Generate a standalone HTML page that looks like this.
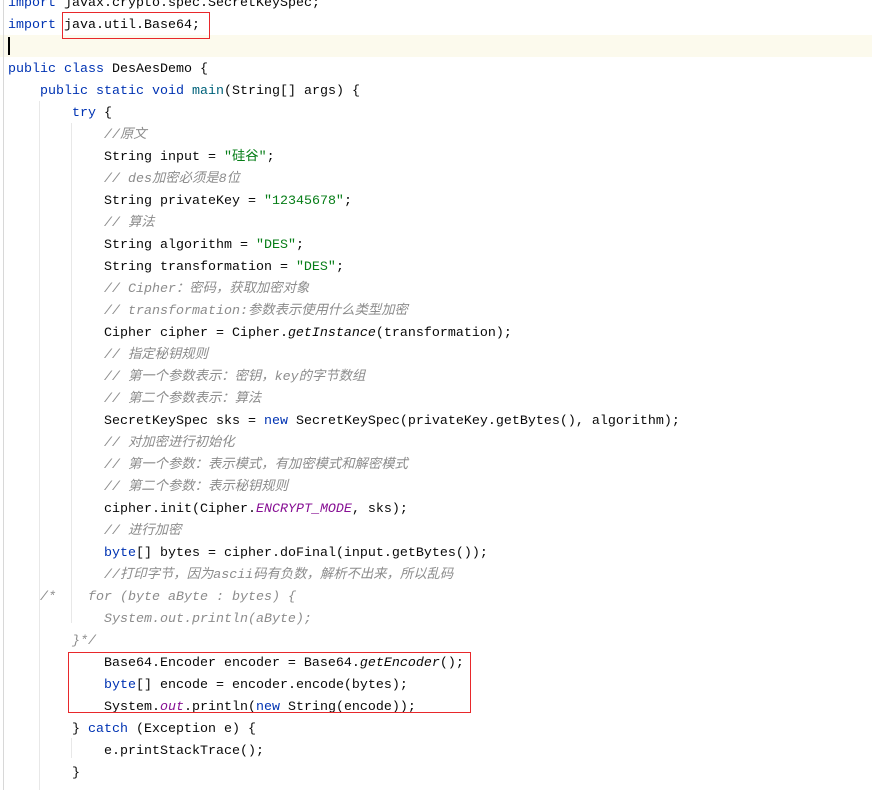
<!DOCTYPE html>
<html><head><meta charset="utf-8"><style>
body{margin:0;width:872px;height:790px;background:#fff;overflow:hidden;position:relative;font-family:"Liberation Mono","Noto Sans CJK SC",monospace;font-size:13.33px;color:#080808}
.hl{position:absolute;left:0;top:35px;width:872px;height:22px;background:#fcfaed}
.code{position:absolute;left:8px;top:-7px;margin:0;font-family:inherit;font-size:13.33px}
.code div{height:22px;line-height:22px;white-space:pre;overflow:visible}
.k{color:#0033b3}.s{color:#067d17}.c{color:#8c8c8c;font-style:italic}.st{color:#871094;font-style:italic}.i{font-style:italic}
.g{position:absolute;width:1px;background:#e8e8e8}
.box{position:absolute;border:1px solid #e8282b}
.cur{position:absolute;left:8px;top:37px;width:2px;height:18px;background:#000}
</style></head><body>
<div class="hl"></div>
<div class="g" style="left:3px;top:0;height:790px;background:#d8d8d8"></div>
<div class="g" style="left:39px;top:101px;height:689px"></div>
<div class="g" style="left:71px;top:123px;height:500px"></div>
<div class="g" style="left:71px;top:738px;height:20px"></div>
<div class="cur"></div>
<div class="code"><div><span class="k">import</span> javax.crypto.spec.SecretKeySpec;</div><div><span class="k">import</span> java.util.Base64;</div><div> </div><div><span class="k">public class</span> DesAesDemo {</div><div>    <span class="k">public static void</span> <span style="color:#00627a">main</span>(String[] args) {</div><div>        <span class="k">try</span> {</div><div>            <span class="c">//原文</span></div><div>            String input = <span class="s">"硅谷"</span>;</div><div>            <span class="c">// des加密必须是8位</span></div><div>            String privateKey = <span class="s">"12345678"</span>;</div><div>            <span class="c">// 算法</span></div><div>            String algorithm = <span class="s">"DES"</span>;</div><div>            String transformation = <span class="s">"DES"</span>;</div><div>            <span class="c">// Cipher：密码，获取加密对象</span></div><div>            <span class="c">// transformation:参数表示使用什么类型加密</span></div><div>            Cipher cipher = Cipher.<span class="i">getInstance</span>(transformation);</div><div>            <span class="c">// 指定秘钥规则</span></div><div>            <span class="c">// 第一个参数表示：密钥，key的字节数组</span></div><div>            <span class="c">// 第二个参数表示：算法</span></div><div>            SecretKeySpec sks = <span class="k">new</span> SecretKeySpec(privateKey.getBytes(), algorithm);</div><div>            <span class="c">// 对加密进行初始化</span></div><div>            <span class="c">// 第一个参数：表示模式，有加密模式和解密模式</span></div><div>            <span class="c">// 第二个参数：表示秘钥规则</span></div><div>            cipher.init(Cipher.<span class="st">ENCRYPT_MODE</span>, sks);</div><div>            <span class="c">// 进行加密</span></div><div>            <span class="k">byte</span>[] bytes = cipher.doFinal(input.getBytes());</div><div>            <span class="c">//打印字节，因为ascii码有负数，解析不出来，所以乱码</span></div><div>    <span class="c">/*    for (byte aByte : bytes) {</span></div><div><span class="c">            System.out.println(aByte);</span></div><div><span class="c">        }*/</span></div><div>            Base64.Encoder encoder = Base64.<span class="i">getEncoder</span>();</div><div>            <span class="k">byte</span>[] encode = encoder.encode(bytes);</div><div>            System.<span class="st">out</span>.println(<span class="k">new</span> String(encode));</div><div>        } <span class="k">catch</span> (Exception e) {</div><div>            e.printStackTrace();</div><div>        }</div></div>
<div class="box" style="left:62px;top:12px;width:146px;height:25px"></div>
<div class="box" style="left:68px;top:652px;width:401px;height:59px"></div>
</body></html>
